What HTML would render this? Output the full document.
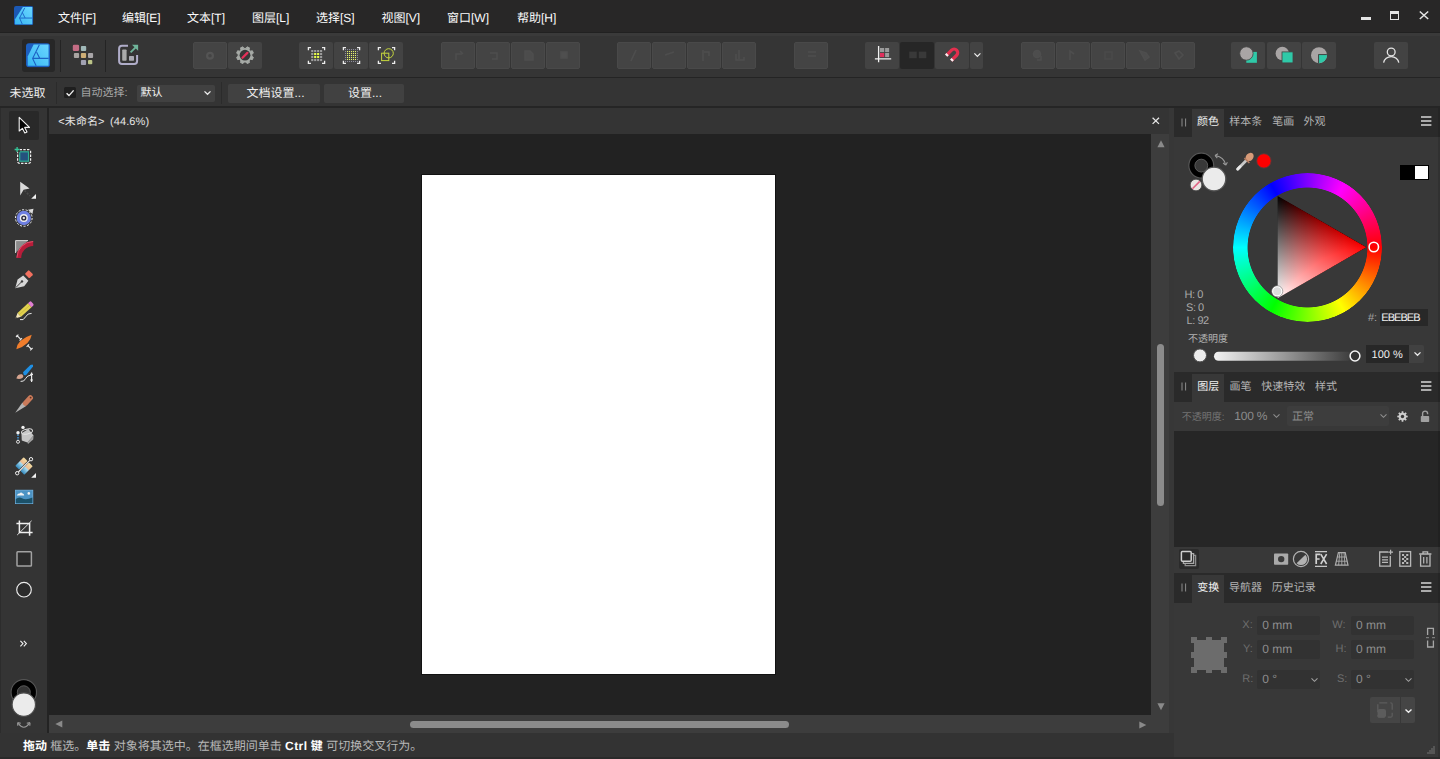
<!DOCTYPE html>
<html lang="zh">
<head>
<meta charset="utf-8">
<title>Affinity Designer</title>
<style>
*{box-sizing:border-box;margin:0;padding:0}
html,body{width:1440px;height:759px;overflow:hidden;background:#333}
body{position:relative;font-family:"Liberation Sans","Noto Sans CJK SC",sans-serif;font-size:12px;color:#e6e6e6;line-height:1;text-rendering:geometricPrecision}
.a{position:absolute}
.t{position:absolute;white-space:nowrap;line-height:14px;height:14px}
svg{display:block;overflow:visible}
.ic{position:absolute}
.m{color:#fbfbfb}
.m .lt{font-size:12px}
/* regions */
#menubar{left:0;top:0;width:1440px;height:32px;background:#282727}
#toolbar{left:0;top:32px;width:1440px;height:46px;background:linear-gradient(#3a3a3a,#3a3a3a 2.5px,#353535 3px);border-top:1px solid #212121;border-bottom:1px solid #242424}
#ctxbar{left:0;top:78px;width:1440px;height:30px;background:#343434;border-bottom:2px solid #252525}
#tools{left:0;top:108px;width:49px;height:626px;background:#343434;border-right:2px solid #232323;border-left:1px solid #2c2c2c}
#doctab{left:49px;top:108px;width:1120px;height:26px;background:#343434}
#canvas{left:49px;top:134px;width:1102px;height:581px;background:#222}
#page{left:373px;top:41px;width:353px;height:499px;background:#fff;box-shadow:0 0 0 1px #121212}
#vscroll{left:1151px;top:134px;width:18px;height:581px;background:#3d3d3d}
#hscroll{left:49px;top:715px;width:1120px;height:18px;background:#3d3d3d}
#status{left:0;top:733px;width:1440px;height:26px;background:#333;border-bottom:2px solid #2a2a2a}
#right{left:1169px;top:108px;width:271px;height:651px;background:#373737}
.tb{position:absolute;top:42px;margin-left:-0.4px;width:33px;height:26.5px;background:#434343;border-radius:2px}
.tb.dis{background:#444;border:1px solid #494949}
.tb.dk{background:#262626}
.ptabbar{position:absolute;left:1174px;width:266px;background:#2a2a2a}
.ptab{position:absolute;background:#383838}
.pbody{position:absolute;left:1174px;width:266px;background:#383838}
.tabt{position:absolute;font-size:11px;line-height:14px;white-space:nowrap;color:#b4b4b4}
.tabt.on{color:#f0f0f0}
.fld{width:63px;height:19px;background:#323232;border-radius:2px}
.lb{font-size:11px;color:#6e6e6e}
.vl{font-size:12px;color:#8e8e8e}
</style>
</head>
<body>
<div class="a" id="menubar"></div>
<div class="a" id="toolbar"></div>
<div class="a" id="ctxbar"></div>
<div class="a" id="tools"></div>
<div class="a" id="doctab"></div>
<div class="a" id="canvas"><div class="a" id="page"></div></div>
<div class="a" id="vscroll"></div>
<div class="a" id="hscroll"></div>
<div class="a" id="right"></div>
<div class="a" id="status"></div>
<svg width="0" height="0" style="position:absolute"><defs>
<linearGradient id="lgA" x1="0" y1="1" x2="1" y2="0"><stop offset="0" stop-color="#38b6f2"/><stop offset="1" stop-color="#6ad6ff"/></linearGradient>
<symbol id="aflogo" viewBox="0 0 24 24">
<rect x="0" y="0" width="24" height="24" rx="3" fill="#1c5fc0"/>
<polygon points="7.6,1.3 22.5,1.3 22.5,22.6 1.7,22.6 1.7,13.2" fill="url(#lgA)"/>
<path d="M13.3 1.7 L6.6 15.2 L10.1 22.6 M6.6 15.2 H22.5 M10.6 9.1 L13.8 15.2" stroke="#1c62c4" stroke-width="1.1" fill="none"/>
</symbol>
<symbol id="aflogo2" viewBox="0 0 24 24">
<rect x="0" y="0" width="24" height="24" rx="2.6" fill="#1b58b4"/>
<polygon points="11.1,1.3 22.7,1.3 22.7,22.7 1.3,22.7 1.3,16.6" fill="url(#lgA)"/>
<path d="M13.4 2.3 L6.9 14.9 L10.2 22.4 M6.9 15 H22.7 M10.2 7.8 L13.8 14.9" stroke="#1d66c8" stroke-width="1.2" fill="none"/>
</symbol>
</defs></svg>
<svg class="ic" style="left:13.5px;top:6.3px" width="19.3" height="19.3"><use href="#aflogo2"/></svg>
<div class="t m" style="left:58px;top:11.2px;font-size:12px">文件<span class="lt">[F]</span></div>
<div class="t m" style="left:122px;top:11.2px;font-size:12px">编辑<span class="lt">[E]</span></div>
<div class="t m" style="left:187px;top:11.2px;font-size:12px">文本<span class="lt">[T]</span></div>
<div class="t m" style="left:252px;top:11.2px;font-size:12px">图层<span class="lt">[L]</span></div>
<div class="t m" style="left:316px;top:11.2px;font-size:12px">选择<span class="lt">[S]</span></div>
<div class="t m" style="left:381.5px;top:11.2px;font-size:12px">视图<span class="lt">[V]</span></div>
<div class="t m" style="left:447px;top:11.2px;font-size:12px">窗口<span class="lt">[W]</span></div>
<div class="t m" style="left:517px;top:11.2px;font-size:12px">帮助<span class="lt">[H]</span></div>
<!-- window controls -->
<div class="a" style="left:1361px;top:16.5px;width:9.5px;height:3.5px;background:#e4e4e4"></div>
<div class="a" style="left:1390px;top:11px;width:9.2px;height:9.3px;border:1.2px solid #e4e4e4;border-top-width:3px"></div>
<svg class="ic" style="left:1419px;top:11px" width="10" height="8.5" viewBox="0 0 10 8.5"><path d="M0.8 0.5 L9.2 8 M9.2 0.5 L0.8 8" stroke="#e4e4e4" stroke-width="1.5" fill="none"/></svg>

<div class="a" style="left:21.8px;top:38.7px;width:33.2px;height:33.2px;background:#272727;border-radius:3px"></div>
<svg class="ic" style="left:25.9px;top:42.9px" width="24.1" height="24.4"><use href="#aflogo"/></svg>
<div class="a" style="left:60px;top:40px;width:1px;height:32px;background:#242424"></div>
<div class="a" style="left:105px;top:40px;width:1px;height:32px;background:#242424"></div>
<svg class="ic" style="left:72px;top:44px" width="22" height="22" viewBox="72 44 22 22">
<rect x="72.8" y="44.8" width="6.3" height="6.2" rx="1.3" fill="#c46c84"/>
<rect x="80.9" y="46" width="5.3" height="5" rx="1" fill="#a0b8b8"/>
<rect x="73.9" y="53" width="5.2" height="5" rx="1" fill="#a8a4a1"/>
<rect x="80.9" y="53" width="5.2" height="5" rx="1" fill="#cdae76"/>
<rect x="88" y="53" width="5.1" height="5" rx="1" fill="#a8a5a8"/>
<rect x="80.9" y="60" width="5.2" height="5" rx="1" fill="#a2a2b2"/>
<rect x="88" y="60" width="4.3" height="4.2" rx="1" fill="#bcc488"/>
</svg>
<svg class="ic" style="left:116px;top:43px" width="24" height="24" viewBox="116 43 24 24">
<path d="M128 45.8 H122 Q119.1 45.8 119.1 48.7 V61.1 Q119.1 64 122 64 H134.2 Q137.1 64 137.1 61.1 V55" fill="none" stroke="#b0adc9" stroke-width="2"/>
<rect x="122.2" y="49.4" width="4.4" height="11.3" rx="0.8" fill="#aaaaaa"/>
<rect x="129" y="56" width="5" height="4.7" rx="0.6" fill="#aaaab2"/>
<path d="M130.6 52.3 L135.6 47.3" stroke="#6fb59a" stroke-width="1.8" fill="none"/>
<path d="M132 44.8 H138.1 V50.8 Z" fill="#6fb59a"/>
</svg>
<div class="tb dis" style="left:193px;width:34.2px"></div>
<div class="tb" style="left:228px;width:34.2px"></div>
<svg class="ic" style="left:204px;top:50px" width="12" height="12" viewBox="0 0 12 12"><circle cx="6" cy="5.7" r="2.9" fill="none" stroke="#545454" stroke-width="2.2"/></svg>
<svg class="ic" style="left:233px;top:43px" width="24" height="24" viewBox="233 43 24 24"><path d="M251.82 56.28 L253.35 57.27 L252.37 59.64 L250.58 59.26 L249.06 60.78 L249.44 62.57 L247.07 63.55 L246.08 62.02 L243.92 62.02 L242.93 63.55 L240.56 62.57 L240.94 60.78 L239.42 59.26 L237.63 59.64 L236.65 57.27 L238.18 56.28 L238.18 54.12 L236.65 53.13 L237.63 50.76 L239.42 51.14 L240.94 49.62 L240.56 47.83 L242.93 46.85 L243.92 48.38 L246.08 48.38 L247.07 46.85 L249.44 47.83 L249.06 49.62 L250.58 51.14 L252.37 50.76 L253.35 53.13 L251.82 54.12Z" fill="#a6aaa6" stroke="#a6aaa6" stroke-width="1" stroke-linejoin="round"/><circle cx="245" cy="55.2" r="5.4" fill="#373737"/><path d="M242.5 57.7 L247.4 52.9" stroke="#e62f58" stroke-width="2.3" stroke-linecap="round"/></svg>
<div class="tb" style="left:299.5px;width:34.2px"></div>
<div class="tb" style="left:334.5px;width:34.2px"></div>
<div class="tb" style="left:369.5px;width:34.2px"></div>
<svg class="ic" style="left:304px;top:44px" width="24" height="24" viewBox="304 44 24 24"><path d="M308.4 50.2 V47.6 H311 M322 47.6 H324.6 V50.2 M324.6 60.8 V63.4 H322 M311 63.4 H308.4 V60.8" fill="none" stroke="#ededed" stroke-width="1.3"/><rect x="311.2" y="50" width="2.1" height="2.1" fill="#9c9c9c"/><rect x="314.15" y="50" width="2.1" height="2.1" fill="#9c9c9c"/><rect x="317.1" y="50" width="2.1" height="2.1" fill="#9c9c9c"/><rect x="320.05" y="50" width="2.1" height="2.1" fill="#9c9c9c"/><rect x="311.2" y="53" width="2.1" height="2.1" fill="#9c9c9c"/><rect x="314.15" y="53" width="2.1" height="2.1" fill="#e9ff4a"/><rect x="317.1" y="53" width="2.1" height="2.1" fill="#e9ff4a"/><rect x="320.05" y="53" width="2.1" height="2.1" fill="#9c9c9c"/><rect x="311.2" y="56" width="2.1" height="2.1" fill="#9c9c9c"/><rect x="314.15" y="56" width="2.1" height="2.1" fill="#e9ff4a"/><rect x="317.1" y="56" width="2.1" height="2.1" fill="#e9ff4a"/><rect x="320.05" y="56" width="2.1" height="2.1" fill="#9c9c9c"/><rect x="311.2" y="59" width="2.1" height="2.1" fill="#9c9c9c"/><rect x="314.15" y="59" width="2.1" height="2.1" fill="#9c9c9c"/><rect x="317.1" y="59" width="2.1" height="2.1" fill="#9c9c9c"/><rect x="320.05" y="59" width="2.1" height="2.1" fill="#9c9c9c"/></svg>
<svg class="ic" style="left:339px;top:44px" width="24" height="24" viewBox="339 44 24 24"><defs><pattern id="dg" x="345" y="49" width="2" height="2" patternUnits="userSpaceOnUse"><rect width="1.05" height="1.05" fill="#8d8d9d"/></pattern><pattern id="dy" x="345" y="49" width="2" height="2" patternUnits="userSpaceOnUse"><rect width="1.05" height="1.05" fill="#e6f56a"/></pattern></defs><path d="M343.4 50.2 V47.6 H346 M357 47.6 H359.6 V50.2 M359.6 60.8 V63.4 H357 M346 63.4 H343.4 V60.8" fill="none" stroke="#ededed" stroke-width="1.3"/><rect x="345" y="49" width="13.2" height="13.2" fill="url(#dg)"/><rect x="347" y="51" width="9.2" height="9.2" fill="url(#dy)"/></svg>
<svg class="ic" style="left:374px;top:44px" width="24" height="24" viewBox="374 44 24 24"><path d="M378.4 50.2 V47.6 H381 M392 47.6 H394.6 V50.2 M394.6 60.8 V63.4 H392 M381 63.4 H378.4 V60.8" fill="none" stroke="#ededed" stroke-width="1.3"/><circle cx="388.7" cy="53.3" r="4.6" fill="none" stroke="#c6d63e" stroke-width="1"/><rect x="381.6" y="53.2" width="7.2" height="7.4" fill="none" stroke="#c6d63e" stroke-width="1"/></svg>
<div class="tb dis" style="left:441.5px;width:34.2px"></div>
<div class="tb dis" style="left:476.5px;width:34.2px"></div>
<div class="tb dis" style="left:511.5px;width:34.2px"></div>
<div class="tb dis" style="left:546.5px;width:34.2px"></div>
<div class="tb dis" style="left:617.5px;width:34.2px"></div>
<div class="tb dis" style="left:652.5px;width:34.2px"></div>
<div class="tb dis" style="left:687.5px;width:34.2px"></div>
<div class="tb dis" style="left:722.5px;width:34.2px"></div>
<div class="tb dis" style="left:794.5px;width:34.2px"></div>
<div class="tb dis" style="left:1021.5px;width:34.2px"></div>
<div class="tb dis" style="left:1056.5px;width:34.2px"></div>
<div class="tb dis" style="left:1091.5px;width:34.2px"></div>
<div class="tb dis" style="left:1126.5px;width:34.2px"></div>
<div class="tb dis" style="left:1161.5px;width:34.2px"></div>
<svg class="ic" style="left:441.5px;top:42px" width="33.5" height="26.5" viewBox="0 0 33.5 26.5"><g fill="none" stroke="#4e4e4e" stroke-width="1.6"><path d="M14 18 V12 H20 M18 9 L21 12"/></g></svg>
<svg class="ic" style="left:476.5px;top:42px" width="33.5" height="26.5" viewBox="0 0 33.5 26.5"><g fill="none" stroke="#4e4e4e" stroke-width="1.6"><path d="M13 11 H20 V17 H15"/></g></svg>
<svg class="ic" style="left:511.5px;top:42px" width="33.5" height="26.5" viewBox="0 0 33.5 26.5"><g fill="none" stroke="#4e4e4e" stroke-width="1.6"><path d="M13 9 H18 L21 12 V18 H13Z" fill="#4c4c4c"/></g></svg>
<svg class="ic" style="left:546.5px;top:42px" width="33.5" height="26.5" viewBox="0 0 33.5 26.5"><g fill="none" stroke="#4e4e4e" stroke-width="1.6"><rect x="14" y="10" width="6" height="6" fill="#4f4f4f"/></g></svg>
<svg class="ic" style="left:617.5px;top:42px" width="33.5" height="26.5" viewBox="0 0 33.5 26.5"><g fill="none" stroke="#4e4e4e" stroke-width="1.6"><path d="M18 8 L13 19"/></g></svg>
<svg class="ic" style="left:652.5px;top:42px" width="33.5" height="26.5" viewBox="0 0 33.5 26.5"><g fill="none" stroke="#4e4e4e" stroke-width="1.6"><path d="M12 13 L21 10"/></g></svg>
<svg class="ic" style="left:687.5px;top:42px" width="33.5" height="26.5" viewBox="0 0 33.5 26.5"><g fill="none" stroke="#4e4e4e" stroke-width="1.6"><path d="M15 8 V19 M16 10 H21 V14"/></g></svg>
<svg class="ic" style="left:722.5px;top:42px" width="33.5" height="26.5" viewBox="0 0 33.5 26.5"><g fill="none" stroke="#4e4e4e" stroke-width="1.6"><path d="M16 8 V17 M13 12 V18 H21 V15"/></g></svg>
<svg class="ic" style="left:794.5px;top:42px" width="33.5" height="26.5" viewBox="0 0 33.5 26.5"><g fill="none" stroke="#4e4e4e" stroke-width="1.6"><path d="M13 10 H21 M13 14 H21"/></g></svg>
<svg class="ic" style="left:1021.5px;top:42px" width="33.5" height="26.5" viewBox="0 0 33.5 26.5"><g fill="none" stroke="#4e4e4e" stroke-width="1.6"><circle cx="15" cy="12" r="3.5" fill="#4d4d4d"/><path d="M19 14 V18 H15"/></g></svg>
<svg class="ic" style="left:1056.5px;top:42px" width="33.5" height="26.5" viewBox="0 0 33.5 26.5"><g fill="none" stroke="#4e4e4e" stroke-width="1.6"><path d="M13 18 V9 L17 12"/></g></svg>
<svg class="ic" style="left:1091.5px;top:42px" width="33.5" height="26.5" viewBox="0 0 33.5 26.5"><g fill="none" stroke="#4e4e4e" stroke-width="1.6"><rect x="13" y="10" width="7" height="7" stroke="#4a4a4a"/></g></svg>
<svg class="ic" style="left:1126.5px;top:42px" width="33.5" height="26.5" viewBox="0 0 33.5 26.5"><g fill="none" stroke="#4e4e4e" stroke-width="1.6"><path d="M13 9 L19 11 L22 15 L18 18Z" fill="#4d4d4d"/></g></svg>
<svg class="ic" style="left:1161.5px;top:42px" width="33.5" height="26.5" viewBox="0 0 33.5 26.5"><g fill="none" stroke="#4e4e4e" stroke-width="1.6"><path d="M13 11 L17 9 L21 13 L17 17Z"/></g></svg>
<div class="tb" style="left:865px;width:34.2px"></div>
<div class="tb dk" style="left:900.3px;width:34.2px"></div>
<div class="tb" style="left:935.3px;width:34.2px"></div>
<div class="tb" style="left:970.3px;width:12.6px"></div>
<svg class="ic" style="left:872px;top:44px" width="22" height="22" viewBox="872 44 22 22">
<rect x="880" y="48" width="4.2" height="4.1" fill="#9b9b9b"/><rect x="885.1" y="48" width="4" height="4.1" fill="#9b9b9b"/>
<rect x="880" y="53" width="4.2" height="4.1" fill="#e12f5c"/><rect x="885.1" y="53" width="4" height="4.1" fill="#9b9b9b"/>
<path d="M878.6 46 V62.3 M874.9 58.8 H891.2" stroke="#f2f2f2" stroke-width="1.3" fill="none"/></svg>
<svg class="ic" style="left:908px;top:50px" width="20" height="10" viewBox="908 50 20 10"><rect x="909.2" y="51.6" width="7.5" height="6.6" fill="#393939"/><rect x="918.8" y="51.6" width="7.5" height="6.6" fill="#393939"/></svg>
<svg class="ic" style="left:942px;top:44px" width="24" height="24" viewBox="942 44 24 24">
<g transform="rotate(45 954.1 52.7)">
<path d="M950.5 60.3 V52.7 A3.6 3.6 0 0 1 957.7 52.7 V60.3" fill="none" stroke="#e32f4e" stroke-width="3.2"/>
<rect x="948.9" y="58.3" width="3.2" height="2.1" fill="#f4f4f4"/><rect x="956.1" y="58.3" width="3.2" height="2.1" fill="#f4f4f4"/>
</g></svg>
<svg class="ic" style="left:972.5px;top:52px" width="9" height="6" viewBox="0 0 9 6"><path d="M1.4 1.4 L4.4 4.4 L7.4 1.4" fill="none" stroke="#f0f0f0" stroke-width="1.2"/></svg>
<div class="tb" style="left:1231.7px;width:34.2px"></div>
<div class="tb" style="left:1266.9px;width:34.2px"></div>
<div class="tb" style="left:1302px;width:34.2px"></div>
<svg class="ic" style="left:1238px;top:44px" width="22" height="22" viewBox="1238 44 22 22">
<rect x="1246.3" y="51.9" width="10.6" height="10.9" fill="#2fc9a8"/><circle cx="1246.4" cy="53.5" r="6.7" fill="#a9a5a5" stroke="#424242" stroke-width="0.8"/></svg>
<svg class="ic" style="left:1273px;top:44px" width="22" height="22" viewBox="1273 44 22 22">
<circle cx="1282.3" cy="53.5" r="6.7" fill="#a9a5a5"/><rect x="1282" y="51.9" width="11" height="11" fill="#2fc9a8" stroke="#424242" stroke-width="0.8"/></svg>
<svg class="ic" style="left:1308px;top:44px" width="22" height="22" viewBox="1308 44 22 22">
<defs><clipPath id="cpb"><circle cx="1319" cy="55.2" r="8"/></clipPath></defs>
<circle cx="1319" cy="55.2" r="8" fill="#a9a5a5"/><rect x="1318.6" y="54.6" width="10" height="10" fill="#2fc9a8" stroke="#3a3a3a" stroke-width="0.9" clip-path="url(#cpb)"/></svg>
<div class="tb" style="left:1374.2px;width:34.2px"></div>
<svg class="ic" style="left:1381px;top:45px" width="20" height="20" viewBox="1381 45 20 20">
<circle cx="1391.2" cy="52" r="3.9" fill="none" stroke="#e4e4e4" stroke-width="1.3"/>
<path d="M1383.6 62.6 A7.7 7.2 0 0 1 1398.8 62.6" fill="none" stroke="#e4e4e4" stroke-width="1.3"/></svg>

<div class="t" style="left:9.5px;top:86.3px;font-size:12px;color:#ececec">未选取</div>
<div class="a" style="left:55.5px;top:82px;width:1px;height:22px;background:#2b2b2b"></div>
<div class="a" style="left:64.3px;top:87.1px;width:11.5px;height:11.2px;background:#1f1f1f;border-radius:1.5px"></div>
<svg class="ic" style="left:64.1px;top:86.8px" width="12" height="12" viewBox="0 0 12 12"><path d="M2.6 6.2 L5 8.6 L9.6 3.4" fill="none" stroke="#f2f2f2" stroke-width="1.4"/></svg>
<div class="t" style="left:80.5px;top:86.3px;font-size:11px;color:#a9a9a9">自动选择:</div>
<div class="a" style="left:137px;top:84.5px;width:78px;height:17px;background:#414141;border-radius:2px"></div>
<div class="t" style="left:140.5px;top:86.3px;font-size:11px;color:#f4f4f4">默认</div>
<svg class="ic" style="left:202.5px;top:90px" width="9" height="6" viewBox="0 0 9 6"><path d="M1.5 1.4 L4.5 4.3 L7.5 1.4" fill="none" stroke="#ededed" stroke-width="1.3"/></svg>
<div class="a" style="left:221px;top:82px;width:1px;height:22px;background:#2b2b2b"></div>
<div class="a" style="left:228px;top:83.5px;width:91.5px;height:19.5px;background:#414141;border-radius:2px"></div>
<div class="t" style="left:246.5px;top:86.3px;font-size:12px;color:#f0f0f0">文档设置...</div>
<div class="a" style="left:324px;top:83.5px;width:79.5px;height:19.5px;background:#414141;border-radius:2px"></div>
<div class="t" style="left:348px;top:86.3px;font-size:12px;color:#f0f0f0">设置...</div>

<!-- TOOLS -->
<div class="a" style="left:8.7px;top:110.5px;width:30px;height:29.3px;background:#292929;border-radius:2px"></div>
<svg class="ic" style="left:0;top:108px" width="48" height="626" viewBox="0 108 48 626">
<defs>
<linearGradient id="gGr" x1="0" y1="0" x2="0" y2="1"><stop offset="0" stop-color="#f1dca2"/><stop offset="0.42" stop-color="#efbc92"/><stop offset="0.52" stop-color="#a6dcf2"/><stop offset="1" stop-color="#3388bb"/></linearGradient>
</defs>
<!-- 1 pointer -->
<path d="M19.2 117.3 V131 L22.4 128.3 L24.8 133 L27 131.9 L24.7 127.4 H29.5 Z" fill="#050505" stroke="#f2f2f2" stroke-width="1.1" stroke-linejoin="round"/>
<!-- 2 artboard -->
<rect x="17.6" y="149.6" width="13" height="13.8" rx="2" fill="none" stroke="#f0f0f0" stroke-width="1.2" stroke-dasharray="2.4 1.3"/>
<rect x="19.7" y="151.8" width="8.8" height="9.4" fill="#24527e" stroke="#2fae94" stroke-width="1.2"/>
<rect x="14.2" y="146.6" width="5.6" height="5.6" fill="#343434"/><path d="M14.6 149.5 H19.6 M17.1 147 V152" stroke="#35c89a" stroke-width="1.3"/>
<!-- 3 node -->
<path d="M20.2 181.8 L29.6 188.4 L23.6 189.8 L20.2 195.4 Z" fill="#dadada"/>
<path d="M24.5 190.5 L30 196" stroke="#4a4a4a" stroke-width="1.6" stroke-dasharray="2 1.4"/>
<path d="M36 194 V198.8 H31.2 Z" fill="#f2f2f2"/>
<!-- 4 point transform -->
<circle cx="23.8" cy="218" r="7.2" fill="#6f80e2"/>
<circle cx="23.8" cy="218" r="8.3" fill="none" stroke="#f0f0f0" stroke-width="1" stroke-dasharray="2.2 1.5"/>
<circle cx="23.8" cy="218" r="4" fill="#efefef"/><circle cx="23.8" cy="218" r="2.6" fill="#26263a"/><circle cx="23.8" cy="218" r="1.2" fill="#e4e4e4"/>
<path d="M28 209.8 L33.5 208.8 L32.4 214 Z" fill="#dcdcdc"/>
<!-- 5 corner -->
<path d="M15.4 253 V240.4 H28 Z" fill="#8c8c8c"/><path d="M15.6 253 V240.6 H28" fill="none" stroke="#d8d8d8" stroke-width="1"/>
<path d="M18.9 258 A14.4 14.4 0 0 1 33.2 243.6" fill="none" stroke="#b81d3a" stroke-width="4.6"/>
<path d="M16.9 257.6 A16.4 16.4 0 0 1 33.2 241.5" fill="none" stroke="#e0506a" stroke-width="1"/>
<!-- 6 pen -->
<path d="M15.2 288.2 L17.6 279.6 L23.2 275.6 L28.4 280.8 L24.2 286.2 Z" fill="#d6d6d6"/>
<path d="M15.6 287.8 L21.6 281.8" stroke="#3c3c3c" stroke-width="1"/><circle cx="22" cy="281.4" r="1.2" fill="#3c3c3c"/>
<rect x="25.8" y="271.4" width="6.4" height="5.6" rx="1" transform="rotate(45 29 274.2)" fill="#f2705f"/>
<!-- 7 pencil -->
<g transform="rotate(-42.5 24 310.5)"><rect x="17.6" y="307.9" width="14.2" height="5.2" fill="#e1d14f"/><path d="M17.6 307.9 L12.6 310.5 L17.6 313.1 Z" fill="#f3e5b6"/><path d="M14 309.8 L12.6 310.5 L14 311.2Z" fill="#555"/><path d="M31.8 307.9 h2.2 a1.4 1.4 0 0 1 1.4 1.4 v2.4 a1.4 1.4 0 0 1 -1.4 1.4 h-2.2z" fill="#e07fd2"/><path d="M17.6 310.5 H31.8" stroke="#c9b83a" stroke-width="0.8"/></g>
<path d="M20 319.6 Q23.5 321 25.6 316.8 Q27.6 313 31.6 313.4" fill="none" stroke="#e8e8e8" stroke-width="1"/>
<!-- 8 vector brush -->
<path d="M16.3 349.2 Q17.4 339.6 31.7 334.8 Q30.2 345 16.3 349.2Z" fill="#f07d2c"/>
<path d="M16.6 335.2 L20.4 339 M16 337 L18.4 334.6 M19.6 340.6 L22 338.2" stroke="#e6e6e6" stroke-width="1.1"/>
<path d="M27.4 345.2 L31.2 349 M26.6 346.8 L29 344.4 M30.2 350.4 L32.6 348" stroke="#e6e6e6" stroke-width="1.1"/>
<!-- 9 paint brush -->
<path d="M23 372.2 L30.4 365 Q33.6 363.2 33 366.6 L26.4 374.8 Q23.6 376.6 23 372.2Z" fill="#1f8fe3"/>
<path d="M16.4 378.6 Q17.4 373.6 22 374.2 Q24.4 376 22.4 378 Q19.6 379.8 16.4 378.6Z" fill="#d5a48f"/>
<path d="M20.6 381.4 Q24 382 25.6 378.6 Q27.2 375.2 31 375.2" fill="none" stroke="#e8e8e8" stroke-width="1"/>
<path d="M31.6 372.6 V382 M30.2 374.4 H33 M30.2 380 H33" stroke="#ececec" stroke-width="1.2"/>
<!-- 10 knife -->
<path d="M15.2 412.8 L22.4 402.4 L26.2 406 Z" fill="#b4b4b4"/>
<path d="M25.4 403.2 L30.4 397.8" stroke="#c97a5a" stroke-width="5.2" stroke-linecap="round"/>
<circle cx="30.6" cy="397.6" r="0.9" fill="#5a3020"/>
<!-- 11 fill -->
<path d="M21.4 433.2 L28.4 429 L33.6 435.6 L27.4 442.6 L21.8 440.4 Z" fill="#c6c6c6"/>
<path d="M27.4 442.6 L33.6 435.6 L33.2 439.6 L28 444 Z" fill="#a2a2a2"/>
<ellipse cx="27" cy="431.6" rx="5.6" ry="2.4" transform="rotate(-12 27 431.6)" fill="none" stroke="#e4e4e4" stroke-width="1"/>
<circle cx="23" cy="427.4" r="1.7" fill="#f0f0f0"/>
<path d="M18 434.6 V440" stroke="#3f8fcf" stroke-width="1.6" stroke-dasharray="1.4 1"/>
<circle cx="18" cy="432.8" r="1.7" fill="#f0f0f0"/><circle cx="18" cy="441.8" r="1.5" fill="#383838" stroke="#f0f0f0" stroke-width="0.9"/>
<!-- 12 gradient -->
<g transform="rotate(45 24 466)"><rect x="17.6" y="460" width="5.4" height="12" rx="0.8" fill="url(#gGr)"/><rect x="25" y="460" width="5.4" height="12" rx="0.8" fill="url(#gGr)"/></g>
<path d="M18.4 472 L29.8 460.4" stroke="#f0f0f0" stroke-width="1.1"/>
<circle cx="17.2" cy="473.2" r="1.7" fill="#383838" stroke="#f0f0f0" stroke-width="1"/><circle cx="31" cy="459.2" r="1.7" fill="#383838" stroke="#f0f0f0" stroke-width="1"/>
<path d="M36 473 V477.8 H31.2 Z" fill="#f2f2f2"/>
<!-- 13 image -->
<rect x="15.4" y="490.2" width="17.4" height="13.4" fill="#4c93c4" stroke="#72b5e4" stroke-width="0.8"/>
<path d="M15.8 499 Q19 496.4 22 498.2 Q26 500.6 32.4 497.4 V503.2 H15.8Z" fill="#1b5169"/>
<path d="M16.8 495.4 Q18 493 19.6 493.6 Q21 491.6 22.6 493.6 Q24 493.6 24.2 495.4 Z" fill="#f2f2f2"/><circle cx="28.8" cy="493.4" r="1.3" fill="#f2f2f2"/>
<!-- 14 crop -->
<path d="M16.4 523.6 H29.6 V535.8 M19.4 520.4 V532.6 H32.6" fill="none" stroke="#f0f0f0" stroke-width="1.5"/>
<path d="M17.2 535 L31.6 520.8" stroke="#f0f0f0" stroke-width="0.9"/>
<!-- 15 rect -->
<rect x="17" y="551.8" width="14.4" height="14.2" rx="0.8" fill="#2b2b2b" stroke="#a2a2a2" stroke-width="1.5"/>
<!-- 16 ellipse -->
<circle cx="24" cy="589.7" r="7.3" fill="#2b2b2b" stroke="#ececec" stroke-width="1.15"/>
<!-- more -->
<path d="M20.4 640.8 L23 643.6 L20.4 646.4 M23.8 640.8 L26.4 643.6 L23.8 646.4" fill="none" stroke="#f0f0f0" stroke-width="1.1"/>
<!-- stroke/fill -->
<circle cx="23.8" cy="692.3" r="12.7" fill="none" stroke="#565656" stroke-width="1.2"/>
<circle cx="23.8" cy="692.3" r="9.4" fill="none" stroke="#000" stroke-width="5.4"/>
<circle cx="23.8" cy="692.3" r="6.5" fill="none" stroke="#565656" stroke-width="1"/>
<circle cx="23.8" cy="704.6" r="11.7" fill="#ebebeb" stroke="#4e4e4e" stroke-width="1.2"/>
<path d="M18.2 723.4 Q23.8 731 29.4 723.4" fill="none" stroke="#9a9a9a" stroke-width="1.1"/>
<path d="M17.6 722.6 l0.2 3.2 M17.6 722.6 l3.2 0.6 M30 722.6 l-0.2 3.2 M30 722.6 l-3.2 0.6" stroke="#9a9a9a" stroke-width="1.1"/>
</svg>

<div class="t" style="left:58.3px;top:114.7px;font-size:11px;color:#e4e4e4;letter-spacing:0.1px;word-spacing:2.2px">&lt;未命名&gt; (44.6%)</div>
<svg class="ic" style="left:1152px;top:117px" width="8" height="8" viewBox="0 0 8 8"><path d="M0.6 0.7 L7 6.9 M7 0.7 L0.6 6.9" stroke="#e8e8e8" stroke-width="1.25" fill="none"/></svg>
<!-- scrollbars -->
<svg class="ic" style="left:1156.5px;top:139.6px" width="8" height="8" viewBox="0 0 8 8"><path d="M4 0.3 L7.6 7.3 H0.4Z" fill="#8a8a8a"/></svg>
<svg class="ic" style="left:1156.5px;top:703px" width="8" height="8" viewBox="0 0 8 8"><path d="M4 7.3 L7.6 0.3 H0.4Z" fill="#8a8a8a"/></svg>
<div class="a" style="left:1157px;top:344px;width:7px;height:162px;background:#8b8b8b;border-radius:3.5px"></div>
<svg class="ic" style="left:54.5px;top:720px" width="8" height="8" viewBox="0 0 8 8"><path d="M0.3 4 L7.3 0.4 V7.6Z" fill="#8a8a8a"/></svg>
<svg class="ic" style="left:1138.5px;top:721px" width="8" height="8" viewBox="0 0 8 8"><path d="M7.3 4 L0.3 0.4 V7.6Z" fill="#8a8a8a"/></svg>
<div class="a" style="left:410px;top:721px;width:378.5px;height:7px;background:#8b8b8b;border-radius:3.5px"></div>

<!-- COLOUR PANEL -->
<div class="ptabbar" style="top:107.5px;height:29px"></div>
<div class="ptab" style="left:1191.6px;top:109.2px;width:32.5px;height:27.5px"></div>
<div class="pbody" style="top:136.5px;height:235.5px"></div>
<svg class="ic" style="left:1180.5px;top:117.5px" width="6" height="9" viewBox="0 0 6 9"><path d="M1 0.5 V8.5 M4.6 0.5 V8.5" stroke="#8c8c8c" stroke-width="1" fill="none"/></svg>
<div class="tabt on" style="left:1197px;top:114.6px">颜色</div>
<div class="tabt" style="left:1229.3px;top:114.6px">样本条</div>
<div class="tabt" style="left:1272.2px;top:114.6px">笔画</div>
<div class="tabt" style="left:1303.5px;top:114.6px">外观</div>
<svg class="ic" style="left:1421px;top:116px" width="11" height="10" viewBox="0 0 11 10"><path d="M0 1 H10.4 M0 5 H10.4 M0 9 H10.4" stroke="#d6d6d6" stroke-width="1.7" fill="none"/></svg>
<!-- stroke / fill selectors -->
<svg class="ic" style="left:1184px;top:148px" width="50" height="48" viewBox="1184 148 50 48">
<circle cx="1201.3" cy="165.6" r="12.4" fill="none" stroke="#575757" stroke-width="1.2"/>
<circle cx="1201.3" cy="165.6" r="9.2" fill="none" stroke="#000" stroke-width="5.2"/>
<circle cx="1201.3" cy="165.6" r="6.4" fill="none" stroke="#575757" stroke-width="1"/>
<circle cx="1196" cy="185" r="5.8" fill="#e9e6e3" stroke="#4a4a4a" stroke-width="0.8"/>
<path d="M1192.4 188.8 L1199.8 181.4" stroke="#e06484" stroke-width="1.6"/>
<circle cx="1214" cy="179" r="11.8" fill="#ebebeb" stroke="#555" stroke-width="1.3"/>
<path d="M1215.6 155.6 Q1224 157 1225.6 164.8" fill="none" stroke="#9a9a9a" stroke-width="1.1"/>
<path d="M1215 155.5 l3 -1.8 M1215 155.5 l2.3 2.6 M1225.7 165.2 l-2.6 -2.2 M1225.7 165.2 l1.7 -3" stroke="#9a9a9a" stroke-width="1.1" fill="none"/>
</svg>
<!-- eyedropper + picked colour -->
<svg class="ic" style="left:1234px;top:150px" width="40" height="24" viewBox="1234 150 40 24">
<path d="M1237.6 169.2 L1246.2 160.4" stroke="#c9c9c9" stroke-width="2.8" stroke-linecap="round"/>
<path d="M1237.8 169 L1240 166.8" stroke="#e8e8e8" stroke-width="2.8" stroke-linecap="round"/>
<ellipse cx="1249.6" cy="157" rx="3.6" ry="4.6" transform="rotate(42 1249.6 157)" fill="#d79a78"/>
<path d="M1244.4 158.2 L1249.4 163" stroke="#b57d62" stroke-width="1.6"/>
<circle cx="1263.9" cy="160.9" r="7.2" fill="#fe0000" stroke="#5a3a3a" stroke-width="0.9"/>
</svg>
<!-- black/white swatch -->
<div class="a" style="left:1399.5px;top:165px;width:29.5px;height:14.5px;background:#000"></div>
<div class="a" style="left:1414.5px;top:166px;width:13.5px;height:12.5px;background:#fff"></div>
<!-- wheel -->
<div class="a" style="left:1232.5px;top:172.5px;width:149.5px;height:149.5px;border-radius:50%;background:conic-gradient(from 90deg,#f00,#ff0,#0f0,#0ff,#00f,#f0f,#f00);-webkit-mask:radial-gradient(circle closest-side,transparent 59.6px,#000 60.3px,#000 74.2px,transparent 74.9px);mask:radial-gradient(circle closest-side,transparent 59.6px,#000 60.3px,#000 74.2px,transparent 74.9px)"></div>
<svg class="ic" style="left:1270px;top:190px" width="112" height="116" viewBox="1270 190 112 116">
<defs>
<linearGradient id="gW" gradientUnits="userSpaceOnUse" x1="1277.6" y1="298.3" x2="1321.95" y2="221.6"><stop offset="0" stop-color="#fff" stop-opacity="1"/><stop offset="1" stop-color="#fff" stop-opacity="0"/></linearGradient>
<linearGradient id="gH" gradientUnits="userSpaceOnUse" x1="1277.6" y1="247.2" x2="1366.3" y2="247.2"><stop offset="0" stop-color="#f00" stop-opacity="0"/><stop offset="0.25" stop-color="#f00" stop-opacity="0.34"/><stop offset="0.5" stop-color="#f00" stop-opacity="0.63"/><stop offset="0.75" stop-color="#f00" stop-opacity="0.84"/><stop offset="1" stop-color="#f00" stop-opacity="1"/></linearGradient>
</defs>
<g style="isolation:isolate">
<polygon points="1277.6,196.1 1366.3,247.2 1277.6,298.3" fill="#000"/>
<polygon points="1277.6,196.1 1366.3,247.2 1277.6,298.3" fill="url(#gW)"/>
<polygon points="1277.6,196.1 1366.3,247.2 1277.6,298.3" fill="url(#gH)" style="mix-blend-mode:plus-lighter"/>
</g>
<circle cx="1373.8" cy="247" r="4.7" fill="none" stroke="#fff" stroke-width="1.6"/>
<circle cx="1277.2" cy="291.3" r="4.7" fill="#dcdcdc" stroke="#fff" stroke-width="1.5"/>
<circle cx="1277.2" cy="291.3" r="5.6" fill="none" stroke="#777" stroke-width="0.6"/>
</svg>
<!-- HSL -->
<div class="t" style="left:1184.5px;top:287.5px;font-size:11px;letter-spacing:-0.45px;color:#a8a8a8">H: 0</div>
<div class="t" style="left:1186px;top:300.5px;font-size:11px;letter-spacing:-0.45px;color:#a8a8a8">S: 0</div>
<div class="t" style="left:1186.5px;top:313.5px;font-size:11px;letter-spacing:-0.45px;color:#a8a8a8">L: 92</div>
<div class="t" style="left:1368px;top:310.5px;font-size:11px;color:#a8a8a8">#:</div>
<div class="a" style="left:1380px;top:309.3px;width:47.5px;height:16.5px;background:#282828"></div>
<div class="t" style="left:1381.3px;top:310.8px;font-size:11px;color:#f0f0f0;letter-spacing:-0.95px">EBEBEB</div>
<div class="t" style="left:1188px;top:332.8px;font-size:10px;color:#b2b2b2">不透明度</div>
<!-- opacity slider -->
<svg class="ic" style="left:1190px;top:345px" width="175" height="22" viewBox="1190 345 175 22">
<defs><linearGradient id="gO" x1="0" x2="1" y1="0" y2="0"><stop offset="0" stop-color="#f2f2f2"/><stop offset="0.5" stop-color="#9a9a9a"/><stop offset="1" stop-color="#3c3c3c"/></linearGradient></defs>
<circle cx="1200" cy="355.4" r="6.5" fill="#ececec" stroke="#4c4c4c" stroke-width="1"/>
<rect x="1214" y="351.8" width="138" height="9" rx="4.5" fill="url(#gO)"/>
<circle cx="1355" cy="356" r="4.9" fill="#333" stroke="#f4f4f4" stroke-width="1.5"/>
</svg>
<div class="a" style="left:1366.3px;top:345.3px;width:43px;height:17.3px;background:#272727"></div>
<div class="t" style="left:1371.6px;top:348px;font-size:11px;color:#f0f0f0">100 %</div>
<div class="a" style="left:1409.3px;top:345.3px;width:14.7px;height:17.3px;background:#414141;border-radius:0 2px 2px 0"></div>
<svg class="ic" style="left:1412.5px;top:351px" width="9" height="6" viewBox="0 0 9 6"><path d="M1.5 1.4 L4.5 4.3 L7.5 1.4" fill="none" stroke="#ededed" stroke-width="1.3"/></svg>

<!-- LAYERS PANEL -->
<div class="ptabbar" style="top:372px;height:30px"></div>
<div class="ptab" style="left:1191.6px;top:373.5px;width:32.5px;height:28.5px"></div>
<div class="pbody" style="top:402px;height:28.5px"></div>
<div class="a" style="left:1174px;top:430.5px;width:266px;height:116px;background:#262626"></div>
<div class="pbody" style="top:546.5px;height:26.5px"></div>
<svg class="ic" style="left:1180.5px;top:382px" width="6" height="9" viewBox="0 0 6 9"><path d="M1 0.5 V8.5 M4.6 0.5 V8.5" stroke="#8c8c8c" stroke-width="1" fill="none"/></svg>
<div class="tabt on" style="left:1197.2px;top:379.8px">图层</div>
<div class="tabt" style="left:1229.6px;top:379.8px">画笔</div>
<div class="tabt" style="left:1261.3px;top:379.8px">快速特效</div>
<div class="tabt" style="left:1315px;top:379.8px">样式</div>
<svg class="ic" style="left:1421px;top:381px" width="11" height="10" viewBox="0 0 11 10"><path d="M0 1 H10.4 M0 5 H10.4 M0 9 H10.4" stroke="#d6d6d6" stroke-width="1.7" fill="none"/></svg>
<!-- controls row -->
<div class="t" style="left:1181.8px;top:411.2px;font-size:10px;color:#737373">不透明度:</div>
<div class="t" style="left:1234.3px;top:409px;font-size:12px;color:#8c8c8c;letter-spacing:-0.2px">100 %</div>
<svg class="ic" style="left:1271.8px;top:413px" width="9" height="6" viewBox="0 0 9 6"><path d="M1.5 1.4 L4.5 4.3 L7.5 1.4" fill="none" stroke="#8f8f8f" stroke-width="1.1"/></svg>
<div class="a" style="left:1287px;top:406px;width:102px;height:20px;background:#3d3d3d;border-radius:2px"></div>
<div class="t" style="left:1292px;top:410.2px;font-size:11px;color:#8c8c8c">正常</div>
<svg class="ic" style="left:1378.5px;top:413px" width="9" height="6" viewBox="0 0 9 6"><path d="M1.5 1.4 L4.5 4.3 L7.5 1.4" fill="none" stroke="#8f8f8f" stroke-width="1.1"/></svg>
<svg class="ic" style="left:1396.6px;top:411px" width="11" height="11" viewBox="0 0 11 11"><path d="M9.18 4.55 L10.73 4.67 L10.73 6.33 L9.18 6.45 L8.77 7.43 L9.79 8.62 L8.62 9.79 L7.43 8.77 L6.45 9.18 L6.33 10.73 L4.67 10.73 L4.55 9.18 L3.57 8.77 L2.38 9.79 L1.21 8.62 L2.23 7.43 L1.82 6.45 L0.27 6.33 L0.27 4.67 L1.82 4.55 L2.23 3.57 L1.21 2.38 L2.38 1.21 L3.57 2.23 L4.55 1.82 L4.67 0.27 L6.33 0.27 L6.45 1.82 L7.43 2.23 L8.62 1.21 L9.79 2.38 L8.77 3.57Z" fill="#cdcdcd"/><circle cx="5.5" cy="5.5" r="1.7" fill="#383838"/></svg>
<svg class="ic" style="left:1419.5px;top:409.5px" width="10" height="12.5" viewBox="0 0 10 12.5"><path d="M2.6 6 V3.6 A2.5 2.5 0 0 1 7.6 3.6 V4.2" fill="none" stroke="#a0a0a0" stroke-width="1.4"/><rect x="0.8" y="6" width="8.4" height="6" rx="0.8" fill="#a0a0a0"/></svg>
<!-- bottom toolbar -->
<div class="a" style="left:1179px;top:549px;width:20px;height:20px;background:#2b2b2b;border-radius:2px"></div>
<svg class="ic" style="left:1180px;top:550px" width="18" height="18" viewBox="0 0 18 18"><path d="M5.2 13.2 V15.6 H15.6 V5.4 H13.4" fill="none" stroke="#8e8e8e" stroke-width="1.3"/><path d="M3.4 11.2 V13.4 H13.6 V3.6 H11.4" fill="none" stroke="#a8a8a8" stroke-width="1.3"/><rect x="1.4" y="1.4" width="9.8" height="9.8" rx="1" fill="none" stroke="#cfcfcf" stroke-width="1.5"/></svg>
<svg class="ic" style="left:1273px;top:551px" width="80" height="18" viewBox="1273 551 80 18">
<rect x="1274" y="553.4" width="14.2" height="11.4" rx="0.8" fill="#a9a9a9"/><circle cx="1281.2" cy="559.1" r="3.2" fill="#3a3a3a"/>
<circle cx="1301" cy="559" r="7.6" fill="none" stroke="#b2b2b2" stroke-width="1.2"/><path d="M1296.6 563.2 A6 6 0 0 0 1305.4 554.8 Z" fill="#b2b2b2"/>
<path d="M1315 551.6 H1327 M1315 566.4 H1327" stroke="#c6c6c6" stroke-width="1.1"/>
<path d="M1316.2 564 V554.4 H1320.4 M1316.2 559 H1319.6" fill="none" stroke="#d0d0d0" stroke-width="1.7"/>
<path d="M1320.8 554.2 L1326.6 564 M1326.6 554.2 L1320.8 564" fill="none" stroke="#d0d0d0" stroke-width="1.6"/>
<path d="M1338.4 552.6 H1345.2 L1348 565.2 H1335.4 Z" fill="none" stroke="#aeaeae" stroke-width="1.2"/>
<path d="M1341.8 552.6 V565.2 M1344 552.6 L1345 565.2 M1339.8 552.6 L1338.6 565.2 M1337.4 557 H1346.2 M1336.4 561.2 H1347.2" fill="none" stroke="#aeaeae" stroke-width="0.9"/>
</svg>
<svg class="ic" style="left:1378px;top:549px" width="56" height="20" viewBox="1378 549 56 20">
<path d="M1388 552 H1379.7 V566.2 H1390.3 V556" fill="none" stroke="#b8b8b8" stroke-width="1.3"/>
<path d="M1390.6 549.8 V554.6 M1388.2 552.2 H1393" stroke="#b8b8b8" stroke-width="1.2"/>
<path d="M1382 557.2 H1388 M1382 559.8 H1388 M1382 562.4 H1388" stroke="#b8b8b8" stroke-width="1.2"/>
<rect x="1399.8" y="551.6" width="10.8" height="14.6" fill="none" stroke="#b8b8b8" stroke-width="1.3"/>
<path d="M1402 554 h2.1 v2 h-2.1z M1406.2 554 h2.1 v2 h-2.1z M1404.1 556 h2.1 v2 h-2.1z M1402 558 h2.1 v2 h-2.1z M1406.2 558 h2.1 v2 h-2.1z M1404.1 560 h2.1 v2 h-2.1z M1402 562 h2.1 v2 h-2.1z M1406.2 562 h2.1 v2 h-2.1z" fill="#b8b8b8"/>
<path d="M1419.2 554 H1431.4 M1423 553.6 V551.8 H1427.6 V553.6" fill="none" stroke="#b8b8b8" stroke-width="1.3"/>
<path d="M1420.6 554.4 V566.2 H1430 V554.4" fill="none" stroke="#b8b8b8" stroke-width="1.3"/>
<path d="M1423.7 557 V563.6 M1426.9 557 V563.6" stroke="#b8b8b8" stroke-width="1.2"/>
</svg>

<!-- TRANSFORM PANEL -->
<div class="ptabbar" style="top:573px;height:29.5px"></div>
<div class="ptab" style="left:1191.6px;top:574.6px;width:32.5px;height:28px"></div>
<div class="pbody" style="top:602.5px;height:154.5px"></div>
<svg class="ic" style="left:1180.5px;top:583px" width="6" height="9" viewBox="0 0 6 9"><path d="M1 0.5 V8.5 M4.6 0.5 V8.5" stroke="#8c8c8c" stroke-width="1" fill="none"/></svg>
<div class="tabt on" style="left:1197.2px;top:581.1px">变换</div>
<div class="tabt" style="left:1229px;top:581.1px">导航器</div>
<div class="tabt" style="left:1271.8px;top:581.1px">历史记录</div>
<svg class="ic" style="left:1421px;top:582px" width="11" height="10" viewBox="0 0 11 10"><path d="M0 1 H10.4 M0 5 H10.4 M0 9 H10.4" stroke="#d6d6d6" stroke-width="1.7" fill="none"/></svg>
<!-- anchor -->
<svg class="ic" style="left:1191px;top:637.3px" width="36" height="36" viewBox="0 0 36 36"><rect x="3" y="3" width="30" height="30" fill="#6c6c6c"/>
<g fill="#6c6c6c"><rect x="0" y="0" width="6" height="6"/><rect x="15" y="0" width="6" height="6"/><rect x="30" y="0" width="6" height="6"/><rect x="0" y="15" width="6" height="6"/><rect x="30" y="15" width="6" height="6"/><rect x="0" y="30" width="6" height="6"/><rect x="15" y="30" width="6" height="6"/><rect x="30" y="30" width="6" height="6"/></g></svg>
<!-- fields -->
<div class="a fld" style="left:1257px;top:615.7px"></div>
<div class="a fld" style="left:1351.2px;top:615.7px"></div>
<div class="a fld" style="left:1257px;top:639.8px"></div>
<div class="a fld" style="left:1351.2px;top:639.8px"></div>
<div class="a fld" style="left:1257px;top:670.2px"></div>
<div class="a fld" style="left:1351.2px;top:670.2px"></div>
<div class="t lb" style="left:1242.3px;top:618.4px">X:</div>
<div class="t lb" style="left:1332.3px;top:618.4px">W:</div>
<div class="t lb" style="left:1243px;top:642.4px">Y:</div>
<div class="t lb" style="left:1335.5px;top:642.4px">H:</div>
<div class="t lb" style="left:1242.3px;top:672.4px">R:</div>
<div class="t lb" style="left:1337px;top:672.4px">S:</div>
<div class="t vl" style="left:1262.2px;top:617.8px">0 mm</div>
<div class="t vl" style="left:1356px;top:617.8px">0 mm</div>
<div class="t vl" style="left:1262.2px;top:641.8px">0 mm</div>
<div class="t vl" style="left:1356px;top:641.8px">0 mm</div>
<div class="t vl" style="left:1262.2px;top:671.8px">0 °</div>
<div class="t vl" style="left:1356px;top:671.8px">0 °</div>
<svg class="ic" style="left:1309.5px;top:676.5px" width="9" height="6" viewBox="0 0 9 6"><path d="M1.5 1.4 L4.5 4.3 L7.5 1.4" fill="none" stroke="#a0a0a0" stroke-width="1.1"/></svg>
<svg class="ic" style="left:1403.5px;top:676.5px" width="9" height="6" viewBox="0 0 9 6"><path d="M1.5 1.4 L4.5 4.3 L7.5 1.4" fill="none" stroke="#a0a0a0" stroke-width="1.1"/></svg>
<!-- link -->
<svg class="ic" style="left:1425.5px;top:626.5px" width="9" height="22" viewBox="0 0 9 22"><path d="M1.6 8 V1.4 H7.4 V8 M1.6 13.4 V20 H7.4 V13.4" fill="none" stroke="#a6a6a6" stroke-width="1.3"/><path d="M0 10.7 H3 M6 10.7 H9" stroke="#8a8a8a" stroke-width="1"/></svg>
<!-- bottom button -->
<div class="a" style="left:1370px;top:697.4px;width:30.4px;height:25.8px;background:#454545;border-radius:2px 0 0 2px"></div>
<div class="a" style="left:1401px;top:697.4px;width:14px;height:25.8px;background:#454545;border-radius:0 2px 2px 0"></div>
<svg class="ic" style="left:1376px;top:701px" width="18" height="18" viewBox="0 0 18 18"><rect x="1.8" y="1.8" width="14.4" height="14.4" rx="1.5" fill="none" stroke="#5c5c5c" stroke-width="1.3" stroke-dasharray="8 3"/><rect x="1.6" y="8" width="8.4" height="8.4" rx="2" fill="#5c5c5c"/></svg>
<svg class="ic" style="left:1403.7px;top:707.5px" width="9" height="6" viewBox="0 0 9 6"><path d="M1.5 1.4 L4.5 4.3 L7.5 1.4" fill="none" stroke="#f0f0f0" stroke-width="1.4"/></svg>
<!-- resize grip -->
<svg class="ic" style="left:1427px;top:745.5px" width="9" height="9" viewBox="0 0 9 9"><g fill="#8c8c8c"><rect x="6.4" y="0.4" width="1.2" height="1.2"/><rect x="4.4" y="2.4" width="1.2" height="1.2"/><rect x="6.4" y="2.4" width="1.2" height="1.2"/><rect x="2.4" y="4.4" width="1.2" height="1.2"/><rect x="4.4" y="4.4" width="1.2" height="1.2"/><rect x="6.4" y="4.4" width="1.2" height="1.2"/><rect x="0.4" y="6.4" width="1.2" height="1.2"/><rect x="2.4" y="6.4" width="1.2" height="1.2"/><rect x="4.4" y="6.4" width="1.2" height="1.2"/><rect x="6.4" y="6.4" width="1.2" height="1.2"/></g></svg>
<div class="a" style="left:1438.3px;top:108px;width:1.7px;height:649px;background:rgba(0,0,0,0.11)"></div>

<div class="t" style="left:23px;top:739.2px;font-size:12px;color:#b8b8b8"><b style="color:#fff">拖动</b> 框选。<b style="color:#fff">单击</b> 对象将其选中。在框选期间单击 <b style="color:#fff"><span style="letter-spacing:0.45px">Ctrl</span> 键</b> 可切换交叉行为。</div>

</body>
</html>
